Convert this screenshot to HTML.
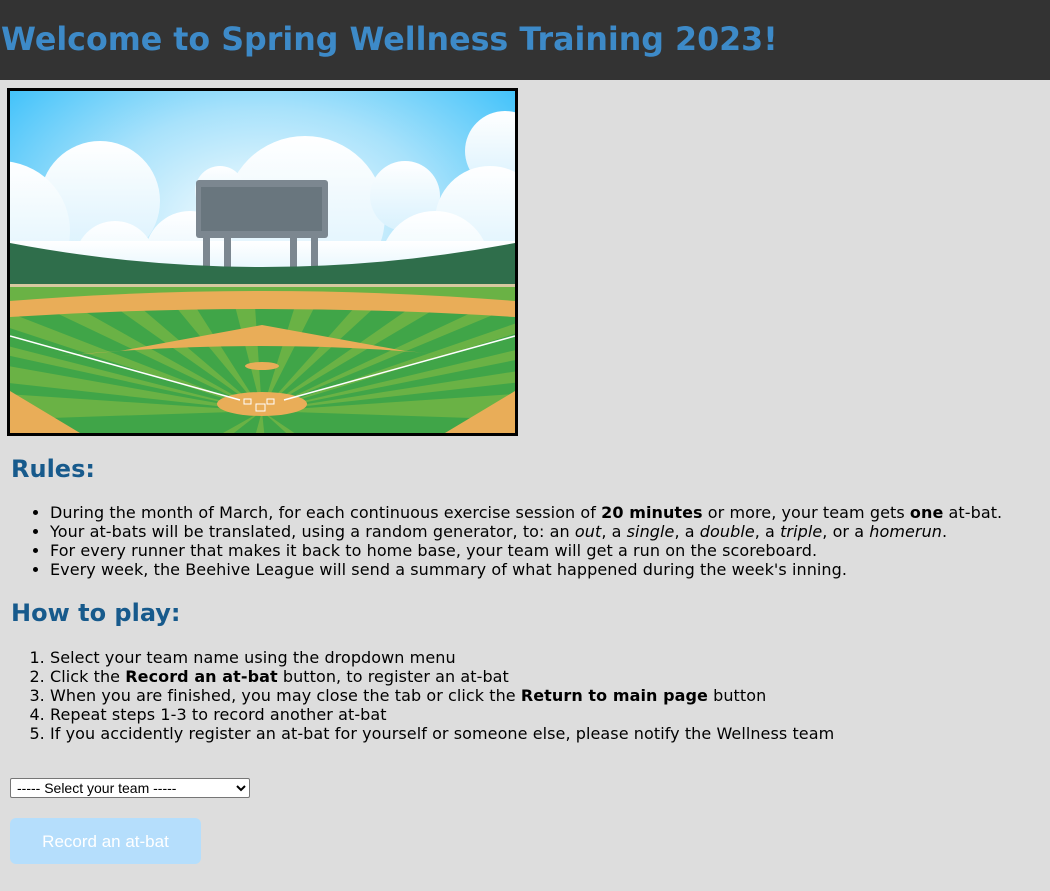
<!DOCTYPE html>
<html><head><meta charset="utf-8"><style>
body{margin:0;background:#dddddd;font-family:"DejaVu Sans",Verdana,sans-serif;font-size:16px;color:#000}
.hdr{height:80px;background:#333;}
.hdr h1{margin:0;padding:0 0 0 1px;line-height:80px;font-size:31.7px;font-weight:bold;color:#3d8ac8;white-space:nowrap}
.pic{position:absolute;left:7px;top:88px;width:505px;height:342px;border:3px solid #000;background:#fff}
h2{position:absolute;left:11px;margin:0;font-size:24px;font-weight:bold;color:#175a8c}
ul,ol{position:absolute;left:10px;margin:0;padding-left:40px;line-height:19px;white-space:nowrap;letter-spacing:0.07px}
select{position:absolute;left:10px;top:778px;width:240px;height:20px;font-family:"Liberation Sans",Arial,sans-serif;font-size:14px;background:#fff;border:1px solid #767676;border-radius:2px;padding:0 0 0 2px}
.btn{position:absolute;left:10px;top:818px;width:191px;height:46px;background:#b5defc;color:#fff;border-radius:6px;text-align:center;line-height:48px;font-size:17px;font-family:"Liberation Sans",Arial,sans-serif}
</style></head><body>
<div class="hdr"><h1>Welcome to Spring Wellness Training 2023!</h1></div>
<div class="pic"><svg width="505" height="342" viewBox="0 0 505 342">
<defs><radialGradient id="sk" cx="0.5" cy="0.4" r="0.7"><stop offset="0" stop-color="#ffffff"/><stop offset="0.5" stop-color="#a8e2fb"/><stop offset="1" stop-color="#2ebcf9"/></radialGradient>
<linearGradient id="cl" x1="0" y1="0" x2="0" y2="1"><stop offset="0" stop-color="#ffffff"/><stop offset="1" stop-color="#d8f1fd"/></linearGradient></defs>
<rect width="505" height="342" fill="url(#sk)"/>
<g fill="url(#cl)">
<circle cx="90" cy="110" r="60"/><circle cx="-10" cy="140" r="70"/><circle cx="295" cy="125" r="80"/><circle cx="395" cy="105" r="35"/><circle cx="495" cy="60" r="40"/><circle cx="480" cy="130" r="55"/><circle cx="210" cy="100" r="25"/><circle cx="180" cy="165" r="45"/><circle cx="425" cy="175" r="55"/><circle cx="105" cy="170" r="40"/>
<rect x="0" y="150" width="505" height="50"/></g>
<rect x="186" y="89" width="132" height="58" rx="3" fill="#7c8790"/><rect x="191" y="96" width="121" height="44" fill="#69767e"/>
<rect x="193" y="147" width="7" height="40" fill="#7c8790"/><rect x="214" y="147" width="7" height="40" fill="#7c8790"/><rect x="280" y="147" width="7" height="40" fill="#7c8790"/><rect x="301" y="147" width="7" height="40" fill="#7c8790"/>
<path d="M0 152 Q252 200 505 152 L505 195 L0 195Z" fill="#2f6e4b"/>
<rect y="193" width="505" height="3" fill="#d8c9a0"/>
<rect y="196" width="505" height="146" fill="#40a548"/>
<g fill="#6ab245"><path d="M0 196H505V210H0Z"/>
<path d="M252 320 L-200 240 L-200 270Z M252 320 L-100 230 L-150 232Z M252 320 L0 222 L-40 224Z M252 320 L70 218 L40 219Z M252 320 L130 216 L105 216Z M252 320 L185 215 L165 215Z M252 320 L245 215 L225 215Z M252 320 L305 215 L285 215Z M252 320 L365 216 L345 216Z M252 320 L425 218 L400 217Z M252 320 L490 221 L465 220Z M252 320 L560 226 L530 224Z M252 320 L650 240 L610 234Z M252 320 L700 270 L700 250Z M252 320 L150 400 L110 400Z M252 320 L260 400 L230 400Z M252 320 L370 400 L340 400Z M252 320 L-50 330 L-50 300Z M252 320 L550 300 L550 330Z"/></g>
<path d="M0 210 Q252 190 505 210 L505 226 Q252 210 0 226Z" fill="#e9ad58"/>
<path d="M50 265 Q252 245 450 265 L395 260 L252 234 L110 260Z" fill="#e9ad58"/>
<ellipse cx="252" cy="275" rx="17" ry="4" fill="#e9ad58"/>
<ellipse cx="252" cy="313" rx="45" ry="12" fill="#e9ad58"/>
<path d="M0 300 L70 342 L0 342Z M505 300 L435 342 L505 342Z" fill="#e9ad58"/>
<path d="M0 245 L230 309 M505 245 L274 309" stroke="#fff" stroke-width="1.5"/>
<g fill="none" stroke="#fff" stroke-width="1"><rect x="234" y="308" width="7" height="5"/><rect x="257" y="308" width="7" height="5"/><rect x="246" y="313" width="9" height="7"/></g>
</svg></div>
<h2 style="top:455px">Rules:</h2>
<ul style="top:503px">
<li>During the month of March, for each continuous exercise session of <b>20 minutes</b> or more, your team gets <b>one</b> at-bat.</li>
<li>Your at-bats will be translated, using a random generator, to: an <i>out</i>, a <i>single</i>, a <i>double</i>, a <i>triple</i>, or a <i>homerun</i>.</li>
<li>For every runner that makes it back to home base, your team will get a run on the scoreboard.</li>
<li>Every week, the Beehive League will send a summary of what happened during the week's inning.</li>
</ul>
<h2 style="top:599px">How to play:</h2>
<ol style="top:648px">
<li>Select your team name using the dropdown menu</li>
<li>Click the <b>Record an at-bat</b> button, to register an at-bat</li>
<li>When you are finished, you may close the tab or click the <b>Return to main page</b> button</li>
<li>Repeat steps 1-3 to record another at-bat</li>
<li>If you accidently register an at-bat for yourself or someone else, please notify the Wellness team</li>
</ol>
<select><option>----- Select your team -----</option></select>
<div class="btn">Record an at-bat</div>
</body></html>
